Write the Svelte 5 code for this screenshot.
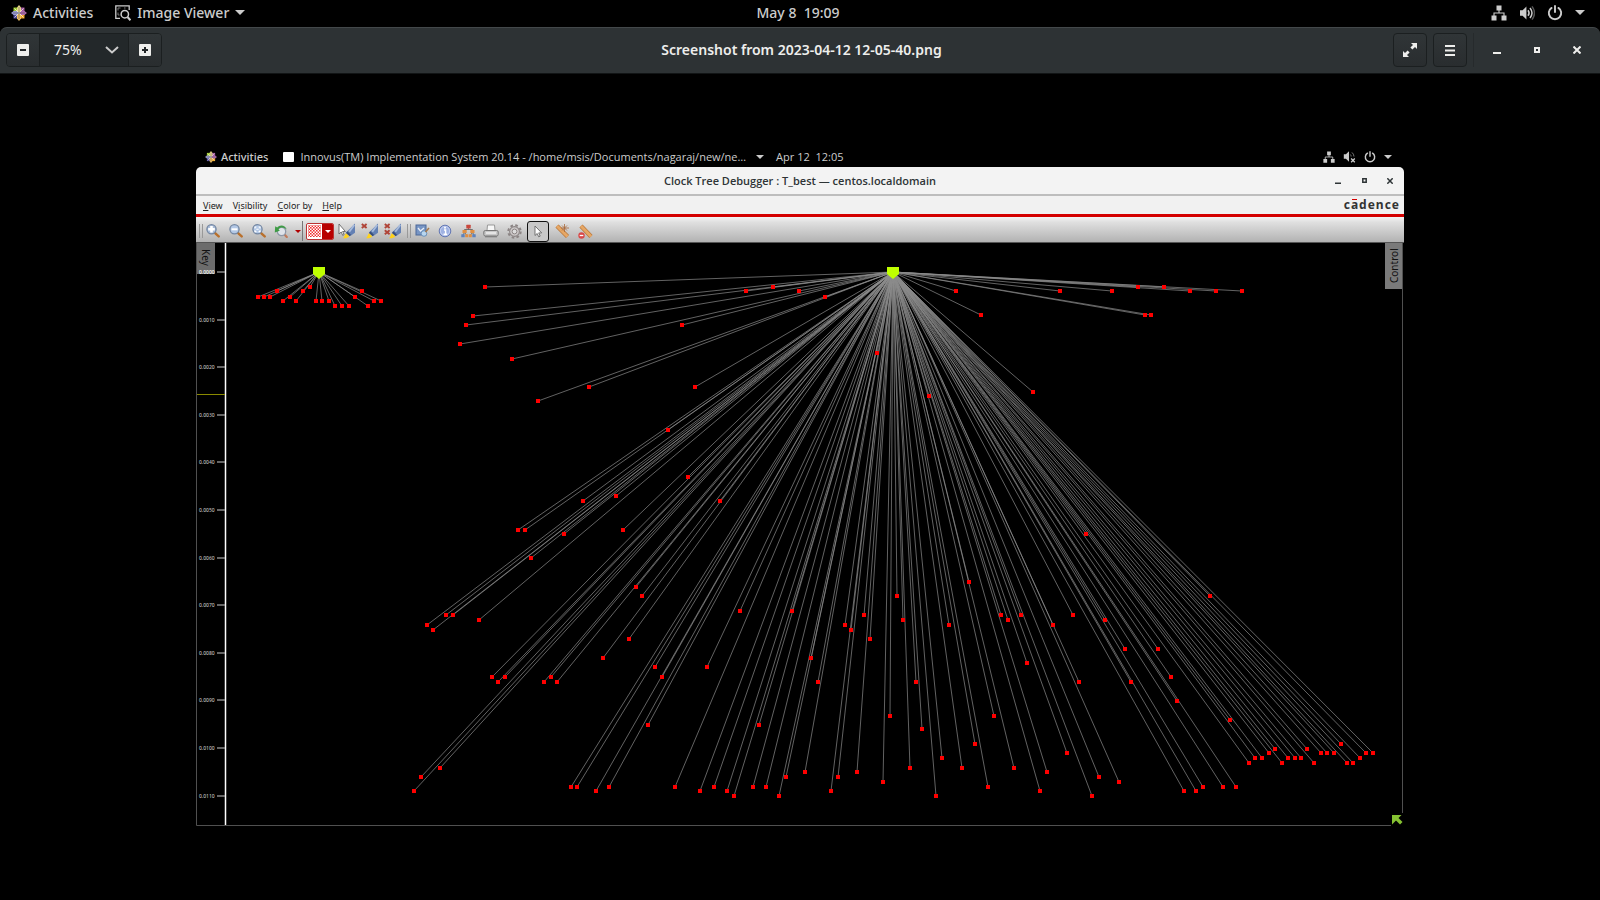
<script>
  const root = [893, 272];
  const sinks = [
    [485,287],[473,316],[466,325],[460,344],[512,359],[538,401],[589,387],[682,325],[695,387],[668,430],
    [688,477],[616,496],[746,291],[773,287],[799,291],[825,297],[877,353],[929,396],[956,291],[981,315],
    [1033,392],[1060,291],[1112,291],[1138,287],[1164,287],[1190,291],[1216,291],[1242,291],[1145,315],[1151,315],
    [583,501],[518,530],[525,530],[623,530],[564,534],[531,558],[636,587],[642,596],[446,615],[453,615],
    [427,625],[433,630],[479,620],[629,639],[603,658],[492,677],[498,682],[505,677],[544,682],[551,677],
    [557,682],[655,667],[662,677],[707,667],[648,725],[440,768],[421,777],[414,791],[571,787],[577,787],
    [596,791],[609,787],[675,787],[700,791],[714,787],[727,791],[734,796],[720,501],[740,611],[792,611],
    [845,625],[851,630],[864,615],[870,639],[897,596],[903,620],[949,625],[969,582],[1001,615],[1008,620],
    [1021,615],[1027,663],[811,658],[818,682],[759,725],[890,716],[916,682],[922,729],[994,716],[975,744],
    [942,758],[962,768],[910,768],[1014,768],[805,772],[857,772],[883,782],[838,777],[831,791],[786,777],
    [779,796],[766,787],[753,787],[936,796],[988,787],[1040,791],[1086,534],[1210,596],[1073,615],[1053,625],
    [1105,620],[1125,649],[1158,649],[1079,682],[1131,682],[1171,677],[1177,701],[1230,720],[1067,753],[1047,772],
    [1092,796],[1099,777],[1119,782],[1184,791],[1196,791],[1203,787],[1223,787],[1236,787],[1249,763],[1255,758],
    [1262,758],[1269,753],[1275,749],[1282,763],[1288,758],[1295,758],[1301,758],[1307,749],[1314,763],[1321,753],
    [1327,753],[1334,753],[1341,744],[1347,763],[1353,763],[1360,758],[1366,753],[1373,753]
  ];
  const smallRoot = [319, 272];
  const smallSinks = [
    [258,297],[264,297],[270,297],[277,291],[283,301],[290,297],[296,301],[303,291],[310,287],[316,301],
    [322,301],[329,301],[335,306],[342,306],[349,306],[355,297],[362,291],[368,306],[374,301],[381,301]
  ];
  const trees = [
    { root: smallRoot, sinks: smallSinks },
    { root, sinks }
  ];
  const ticks = Array.from({ length: 12 }, (_, i) => ({
    y: Math.round(272 + i * 47.6),
    label: (i / 1000).toFixed(4)
  }));
  let zoom = $state('75%');
</script>

{#snippet centos(size)}
  <svg width={size} height={size} viewBox="0 0 16 16" aria-hidden="true">
    <path d="M2.500 2.500h5v5h-5z" fill="#9ccd2a" /><path d="M8.500 2.500h5v5h-5z" fill="#a0569e" />
    <path d="M2.500 8.500h5v5h-5z" fill="#4f4a9a" /><path d="M8.500 8.500h5v5h-5z" fill="#efa724" />
    <path d="M8 0l2 2.600V6L8 8 6 6V2.600z" fill="#e8d98a" /><path d="M16 8l-2.600 2H10L8 8l2-2h3.400z" fill="#b06cb0" />
    <path d="M8 16l-2-2.600V10l2-2 2 2v3.400z" fill="#eebf62" /><path d="M0 8l2.600-2H6l2 2-2 2H2.600z" fill="#9a9cd0" />
    <path d="M3.500 3.500l9 9M12.500 3.500l-9 9" stroke="#f4f0e8" stroke-width=".8" />
    <path d="M8 2v12M2 8h12" stroke="#4a4a4a" stroke-width=".5" />
  </svg>
{/snippet}

{#snippet network(size)}
  <svg width={size} height={size} viewBox="0 0 16 16" fill="#ccc" aria-hidden="true">
    <path d="M5.500.500h5v5h-5zM.500 10.500h5v5h-5zM10.500 10.500h5v5h-5z" />
    <path d="M8 5v3M3 11V8h10v3" fill="none" stroke="#ccc" stroke-width="1.100" />
  </svg>
{/snippet}

{#snippet volume(size, muted)}
  <svg width={size} height={size} viewBox="0 0 16 16" aria-hidden="true">
    <path d="M1 5.300h2.600L7.400 1.600v12.800L3.600 10.700H1z" fill="#ccc" />
    {#if muted}
      <path d="M9 5.500q1 1 1 2.500M11 3q2.500 2 2.500 5" fill="none" stroke="#777" stroke-width="1.200" />
      <path d="M10 10.500l4.500 4.500M14.500 10.500 10 15" stroke="#ccc" stroke-width="1.600" />
    {:else}
      <path d="M9 5.200q2.200 2.800 0 5.600M11 3q4 5 0 10" fill="none" stroke="#ccc" stroke-width="1.500" />
      <path d="M13 1.400q5 6.600 0 13.200" fill="none" stroke="#555" stroke-width="1.500" />
    {/if}
  </svg>
{/snippet}

{#snippet power(size)}
  <svg width={size} height={size} viewBox="0 0 16 16" fill="none" stroke="#ccc" stroke-width="1.900" stroke-linecap="round" aria-hidden="true">
    <path d="M4.600 2.900a6.200 6.200 0 1 0 6.800 0M8 1v6" />
  </svg>
{/snippet}

{#snippet caret(w)}
  <svg width={w} height={w / 2} viewBox="0 0 10 5" aria-hidden="true"><path d="M0 0h10L5 5z" fill="#ccc" /></svg>
{/snippet}

{#snippet lens(kind)}
  <svg width="14" height="14" viewBox="0 0 14 14" aria-hidden="true">
    <path d="M8.800 8.800l3.900 3.600" stroke="#b9702c" stroke-width="2.400" stroke-linecap="round" />
    <circle cx="5.500" cy="5.300" r="4.600" fill={kind === 'in' ? '#a9bcd8' : '#b3c8e6'} stroke="#7487a2" stroke-width="1.300" />
    {#if kind === 'in'}
      <path d="M5.500 2v6.600M2.200 5.300h6.600" stroke="#fff" stroke-width="2.600" />
    {:else if kind === 'out'}
      <path d="M2.500 5.300h6" stroke="#fff" stroke-width="2" />
    {:else}
      <path d="M3 4.400V3h1.400M6.600 3H8v1.400M8 6.200v1.400H6.600M4.400 7.600H3V6.200M4.300 5.300h2.400" stroke="#fff" stroke-width="1.100" fill="none" />
    {/if}
  </svg>
{/snippet}

{#snippet brush(kind)}
  <svg width="18" height="16" viewBox="0 0 18 16" aria-hidden="true">
    <path d="M17 .500v9.300l-4.300 3L8.600 9z" fill="#6380b4" /><path d="M16.300 2 11.300 8.800" stroke="#a9bcdc" stroke-width="1.800" />
    <path d="M9.300 8.200l3.900 3.700-1.700 1.400-3.700-3.300z" fill="#3a4f7c" />
    <path d="M7.800 10.200l3.400 3c-1.200 1.700-3.600 2.300-6.200 2 1.500-1 1.600-3.500 2.800-5z" fill="#ffd21a" />
    {#if kind === 'pointer'}
      <path d="M1 1v10l2.200-2 1.500 3.300 1.400-.700L4.600 8.500h2.800z" fill="#fff" stroke="#555" stroke-width=".800" />
    {:else}
      <path d="M.800 1l4.800 4M5.600 1 .800 5" stroke="#b04438" stroke-width="1.900" />
      {#if kind === 'double'}<path d="M.800 7.200l4.800 4M5.600 7.200l-4.800 4" stroke="#b04438" stroke-width="1.900" />{/if}
    {/if}
  </svg>
{/snippet}

<div class="desktop">
  <header class="topbar">
    <div class="bar-left">
      <button class="plain act">{@render centos(16)}<span>Activities</span></button>
      <button class="plain app">
        <svg width="16" height="16" viewBox="0 0 16 16" fill="none" stroke="#ccc" aria-hidden="true">
          <path d="M5 13.400H.800V.800h13.400V5" stroke-width="1.300" />
          <path d="M3 5.500V3h2.500M9 3h1.500M3 7.500V10h1.500" stroke="#777" />
          <circle cx="9.800" cy="9.200" r="3.700" stroke-width="1.500" /><path d="M12.500 12l3 3.200" stroke-width="2.200" />
        </svg>
        <span>Image Viewer</span>{@render caret(10)}
      </button>
    </div>
    <time>May 8&nbsp; 19:09</time>
    <button class="plain status" aria-label="System">
      {@render network(16)}{@render volume(16, false)}{@render power(16)}{@render caret(10)}
    </button>
  </header>

  <div class="headerbar">
    <div class="zoom">
      <button aria-label="Zoom out"><svg width="12" height="12" viewBox="0 0 12 12"><rect width="12" height="12" rx="1" fill="#eeeeec" /><path d="M3 6h6" stroke="#222628" stroke-width="2" /></svg></button>
      <div class="level">
        <select aria-label="Zoom level" bind:value={zoom}><option>75%</option><option>100%</option></select>
        <svg width="14" height="8" viewBox="0 0 14 8" aria-hidden="true"><path d="M1 1l6 5.500L13 1" fill="none" stroke="#ccc" stroke-width="2" /></svg>
      </div>
      <button aria-label="Zoom in"><svg width="12" height="12" viewBox="0 0 12 12"><rect width="12" height="12" rx="1" fill="#eeeeec" /><path d="M3 6h6M6 3v6" stroke="#222628" stroke-width="2" /></svg></button>
    </div>
    <h1>Screenshot from 2023-04-12 12-05-40.png</h1>
    <div class="actions">
      <button class="raised" aria-label="Fullscreen">
        <svg width="14" height="14" viewBox="0 0 14 14" fill="#eeeeec" aria-hidden="true"><path d="M8 0h6v6l-2-2-2.600 2.600-2-2L10 2zM6 14H0V8l2 2 2.600-2.600 2 2L4 12z" /></svg>
      </button>
      <button class="raised" aria-label="Menu">
        <svg width="10" height="11" viewBox="0 0 10 11" fill="#eeeeec" aria-hidden="true"><path d="M0 0h10v2H0zM0 4.500h10v2H0zM0 9h10v2H0z" /></svg>
      </button>
      <div class="window">
        <button class="plain" aria-label="Minimize"><svg width="8" height="8" viewBox="0 0 8 8"><path d="M0 6h8v2H0z" fill="#eeeeec" /></svg></button>
        <button class="plain" aria-label="Maximize"><svg width="6" height="6" viewBox="0 0 6 6"><path d="M1 1h4v4H1z" fill="none" stroke="#eeeeec" stroke-width="2" /></svg></button>
        <button class="plain" aria-label="Close"><svg width="8" height="8" viewBox="0 0 8 8"><path d="M.500.500l7 7M7.500.500l-7 7" stroke="#eeeeec" stroke-width="2" /></svg></button>
      </div>
    </div>
  </div>

  <main class="viewer">
    <section class="shot">
      <div class="shot-bar">
        <span class="s-act">{@render centos(12)}<span>Activities</span></span>
        <span class="s-app">
          <svg width="11" height="10" viewBox="0 0 11 10" aria-hidden="true"><rect width="11" height="10" rx="1" fill="#fff" /></svg>
          <span class="s-title">Innovus(TM) Implementation System 20.14 - /home/msis/Documents/nagaraj/new/ne…</span>
          {@render caret(8)}
        </span>
        <time>Apr 12&nbsp; 12:05</time>
        <span class="s-status">{@render network(12)}{@render volume(13, true)}{@render power(12)}{@render caret(8)}</span>
      </div>

      <div class="titlebar">
        <h2>Clock Tree Debugger : T_best — centos.localdomain</h2>
        <div class="s-window">
          <button class="plain" aria-label="Minimize tool"><svg width="6" height="6" viewBox="0 0 6 6"><path d="M0 4.500h6V6H0z" fill="#2e3436" /></svg></button>
          <button class="plain" aria-label="Maximize tool"><svg width="5" height="5" viewBox="0 0 5 5"><path d="M.800.800h3.400v3.400H.800z" fill="none" stroke="#2e3436" stroke-width="1.500" /></svg></button>
          <button class="plain" aria-label="Close tool"><svg width="6" height="6" viewBox="0 0 6 6"><path d="M.300.300l5.400 5.400M5.700.300.300 5.700" stroke="#2e3436" stroke-width="1.500" /></svg></button>
        </div>
      </div>

      <nav class="menubar">
        <button class="plain"><u>V</u>iew</button>
        <button class="plain">V<u>i</u>sibility</button>
        <button class="plain"><u>C</u>olor by</button>
        <button class="plain"><u>H</u>elp</button>
        <span class="brand">c<span class="macron">a</span>dence</span>
      </nav>

      <div class="toolbar">
        <span class="grip"></span>
        <div class="tools">
          <button class="plain" aria-label="Magnify">{@render lens('in')}</button>
          <button class="plain" aria-label="Reduce">{@render lens('out')}</button>
          <button class="plain" aria-label="Fit">{@render lens('fit')}</button>
          <button class="plain wide" aria-label="Previous view">
            <svg width="14" height="14" viewBox="0 0 14 14" aria-hidden="true">
              <path d="M10 10l2.800 3" stroke="#c27a5a" stroke-width="2.200" stroke-linecap="round" />
              <circle cx="7.500" cy="7.500" r="4.200" fill="#dfe3ea" stroke="#8f98a8" stroke-width="1.300" />
              <path d="M12.800 5.500C11 .500 5.500.300 3.200 3.600L1.200 2.200.800 8.500l5-1.700-1.400-1.600c1.800-2.400 5.700-2.200 8.400.300z" fill="#3e9b45" />
            </svg>
            <svg width="6" height="3" viewBox="0 0 6 3" aria-hidden="true"><path d="M0 0h6L3 3z" fill="#b00000" /></svg>
          </button>
          <button class="swatch" aria-label="Highlight colour">
            <svg width="15" height="14" viewBox="0 0 15 14" aria-hidden="true">
              <defs><pattern id="chk" width="3" height="3" patternUnits="userSpaceOnUse"><rect width="3" height="3" fill="#fff" /><path d="M0 0h1.600v1.600H0zM1.600 1.600H3V3H1.600z" fill="#f03030" /></pattern></defs>
              <rect x="1" y="1" width="13" height="12" fill="url(#chk)" />
            </svg>
            <span><svg width="6" height="3" viewBox="0 0 6 3" aria-hidden="true"><path d="M0 0h6L3 3z" fill="#fff" /></svg></span>
          </button>
          <button class="plain" aria-label="Highlight selected">{@render brush('pointer')}</button>
          <button class="plain" aria-label="Clear highlight">{@render brush('single')}</button>
          <button class="plain" aria-label="Clear all highlights">{@render brush('double')}</button>
        </div>
        <span class="grip second"></span>
        <div class="tools">
          <button class="plain" aria-label="Preferences">
            <svg width="15" height="14" viewBox="0 0 15 14" aria-hidden="true"><rect x="1" y="1" width="10" height="10" fill="#7795c4" stroke="#4d6899" /><path d="M3 4l2.500 3L9 4" stroke="#e8eef8" stroke-width="1.300" fill="none" /><circle cx="9" cy="9.500" r="2.800" fill="#b8d6ef" stroke="#6d93bb" /><path d="M10.500 8l3.500-4" stroke="#a77a4b" stroke-width="1.500" /></svg>
          </button>
          <button class="plain" aria-label="Information">
            <svg width="14" height="14" viewBox="0 0 14 14" aria-hidden="true"><circle cx="7" cy="7" r="5.800" fill="#9fb2e2" stroke="#6478b4" /><circle cx="7" cy="7" r="4.600" fill="none" stroke="#ccd6f2" stroke-width=".800" /><path d="M6 6h1.600v4M5.500 10.300h3.600" stroke="#fff" stroke-width="1.400" fill="none" /><circle cx="7" cy="3.700" r="1" fill="#fff" /></svg>
          </button>
          <button class="plain" aria-label="Hierarchy">
            <svg width="15" height="14" viewBox="0 0 15 14" aria-hidden="true"><path d="M7.500 4v2M3.500 7V5.500h8V7M3.500 8.500 2 11M3.500 8.500 5.500 11M11.500 8.500 9.500 11M11.500 8.500 13 11" stroke="#666" stroke-width=".900" fill="none" /><rect x="5.300" y=".800" width="4.400" height="3.600" rx=".500" fill="#c9473c" /><rect x="1.500" y="6" width="4.200" height="3" fill="#e08f42" /><rect x="9.300" y="6" width="4.200" height="3" fill="#e08f42" /><path d="M.300 10.200h3.400v3H.300zM11.300 10.200h3.400v3h-3.400z" fill="#5d82bd" /><path d="M4.200 10.200h3v3h-3zM7.800 10.200h3v3h-3z" fill="#e08f42" /></svg>
          </button>
          <button class="plain" aria-label="Print">
            <svg width="16" height="14" viewBox="0 0 16 14" aria-hidden="true"><path d="M4 6.500 4.500 1h7l.500 5.500z" fill="#f7f7f7" stroke="#999" /><rect x=".800" y="6.500" width="14.400" height="5.500" rx="1.500" fill="#c8c8c8" stroke="#777" /><path d="M2 12.800h12" stroke="#777" /><path d="M3 9h10" stroke="#f4f4f4" stroke-width="1.300" /></svg>
          </button>
          <button class="plain" aria-label="Settings">
            <svg width="15" height="15" viewBox="0 0 15 15" aria-hidden="true"><circle cx="7.500" cy="7.500" r="6.200" fill="none" stroke="#8c8585" stroke-width="2" stroke-dasharray="2.600 2.270" /><circle cx="7.500" cy="7.500" r="4.900" fill="#ccc8c8" stroke="#8c8585" stroke-width="1.100" /><circle cx="7.500" cy="7.500" r="2.400" fill="#ddd" stroke="#8c8585" /></svg>
          </button>
          <button class="plain active" aria-label="Select" aria-pressed="true">
            <svg width="10" height="13" viewBox="0 0 10 13" aria-hidden="true"><path d="M2 1v9.500l2.200-2 1.500 3.300 1.500-.700-1.500-3.200h3z" fill="#fff" stroke="#666" stroke-width=".900" /></svg>
          </button>
          <button class="plain" aria-label="Measure">
            <svg width="15" height="15" viewBox="0 0 15 15" aria-hidden="true"><path d="M2 2l10.500 10.500" stroke="#b9763a" stroke-width="4.400" /><path d="M2 2l10.500 10.500" stroke="#e6a765" stroke-width="3" /><path d="M9.500 0v8M6 4h8M7 1.500l5 5M12 1.500l-5 5" stroke="#a8683a" stroke-width=".800" /></svg>
          </button>
          <button class="plain" aria-label="Remove measures">
            <svg width="15" height="15" viewBox="0 0 15 15" aria-hidden="true"><path d="M3 2l10 10.500" stroke="#b9763a" stroke-width="4.400" /><path d="M3 2l10 10.500" stroke="#e6a765" stroke-width="3" /><circle cx="3.500" cy="11.500" r="3.200" fill="#d94848" /><path d="M1.700 11.500h3.600" stroke="#fff" stroke-width="1.300" /></svg>
          </button>
        </div>
      </div>

      <div class="canvas">
        <button class="tab key">Key</button>
        <button class="tab control">Control</button>
        <svg class="chart" viewBox="196 243 1208 583" role="img" aria-label="Clock tree">
          <path d="M196.500 243V825.500H1391M1402.500 243V813" fill="none" stroke="#505050" />
          {#each trees as t}
            {#each t.sinks as [x, y]}
              <line x1={t.root[0]} y1={t.root[1]} x2={x} y2={y} />
            {/each}
          {/each}
          {#each trees as t}
            {#each t.sinks as [x, y]}
              <rect x={x - 2} y={y - 2} width="4" height="4" fill="#f00" />
            {/each}
            <path d="M{t.root[0] - 6} 267h12v7l-6 5-6-5z" fill="#bfff00" />
          {/each}
          <path d="M225.500 243V825" stroke="#fff" stroke-width="1.500" />
          {#each ticks as tick}
            <path d="M217 {tick.y}h8" stroke="#aaa" stroke-width="1.200" />
            <text class:first={tick.y === 272} x="199" y={tick.y + 2}>{tick.label}</text>
          {/each}
          <path d="M197 394.500h28" stroke="#8a8a00" />
          <path d="M1392 815h9.500l-3 3 4 4-2.500 2.500-4-4-4 4z" fill="#86c232" />
        </svg>
      </div>
    </section>
  </main>
</div>

<style>
  :global(body) { background: #000; }
  * { box-sizing: border-box; }
  .desktop {
    display: flex; flex-direction: column; min-height: 100vh; background: #000;
    font-family: "Noto Sans", "Open Sans", sans-serif; font-size: 14px; font-weight: 500; color: #ccc;
  }
  button, select { font: inherit; color: inherit; margin: 0; padding: 0; border: 0; background: none; }
  svg { display: block; flex: none; }
  button { display: flex; align-items: center; justify-content: center; }
  h1, h2 { margin: 0; font-size: inherit; text-align: center; white-space: nowrap; }
  h1, h2 { font-weight: 600; }

  .topbar { display: grid; grid-template-columns: 1fr auto 1fr; align-items: center; height: 27px; padding: 0 15px 2px 11px; }
  .topbar span, time { white-space: nowrap; }
  .bar-left { display: flex; gap: 22px; }
  .act, .app { gap: 6px; }
  .status { justify-self: end; gap: 12px; }

  .headerbar {
    display: grid; grid-template-columns: 1fr auto 1fr; align-items: center; height: 47px; padding: 0 3px 1px 6px;
    background: #2d3234; border-top: 1px solid #43484a; border-bottom: 1px solid #111415; border-radius: 7px 7px 0 0; color: #eeeeec;
  }
  .headerbar h1 { padding-bottom: 2px; }
  .zoom { display: flex; justify-self: start; height: 34px; border: 1px solid #1b1f20; border-radius: 4px; overflow: hidden; }
  .zoom button { width: 32px; background: linear-gradient(#303537, #292d2f); }
  .level { display: flex; align-items: center; width: 90px; padding: 0 9px 0 14px; background: #23282a; border: solid #1b1f20; border-width: 0 1px; font-weight: 400; }
  .level select { flex: 1; appearance: none; padding-bottom: 2px; }
  .level svg { pointer-events: none; }
  .actions { display: flex; justify-self: end; gap: 6px; }
  .raised { width: 34px; height: 34px; border: 1px solid #1b1f20; border-radius: 4px; background: linear-gradient(#303537, #292d2f); }
  .window { display: flex; border-left: 1px solid #262a2c; padding-left: 3px; }
  .window button { width: 40px; }

  .viewer { flex: 1; display: flex; flex-direction: column; align-items: center; justify-content: center; }
  .shot { width: 75.5%; font-size: 11px; }
  .shot-bar { display: flex; align-items: center; height: 19px; padding: 0 12px 2px 9px; }
  .s-act, .s-app, .s-status { display: flex; align-items: center; }
  .s-act { gap: 4px; margin-right: 15px; }
  .s-app { gap: 6px; margin-right: 12px; }
  .s-title { white-space: nowrap; margin-right: 4px; }
  .s-title, .shot-bar time, h2 { font-family: "Open Sans", "Noto Sans", sans-serif; }
  .s-title, .shot-bar time { font-weight: 500; }
  .s-status { margin-left: auto; gap: 8px; }

  .titlebar {
    display: grid; grid-template-columns: 1fr auto 1fr; align-items: center; height: 29px;
    background: #f3f3f3; border-bottom: 2px solid #bdbdbd; border-radius: 5px 5px 0 0; color: #2e3436;
  }
  .titlebar h2 { grid-column: 2; }
  .s-window { display: flex; justify-self: end; padding-right: 1px; }
  .s-window button { width: 26px; height: 20px; }

  .menubar { display: flex; align-items: center; gap: 10px; height: 21px; padding: 0 4px 0 7px; background: #f1f1f1; border-bottom: 3px solid #d40000; color: #222; font-size: 9px; font-weight: 400; }
  .brand { margin-left: auto; font-size: 12px; line-height: 14px; font-weight: 700; letter-spacing: 1px; color: #333; }
  .macron { position: relative; }
  .macron::before { content: ""; position: absolute; left: 1px; top: 3px; width: 5px; height: 1px; background: #d40000; }

  .toolbar { display: flex; align-items: center; height: 26px; padding: 3px 0 0 3px; background: linear-gradient(#f4f4f4, #e0e0e0 20%, #b2b2b2); border-bottom: 1px solid #555; }
  .grip { width: 4px; height: 14px; border: solid #999; border-width: 0 1px; }
  .grip.second { margin: 0 1px 0 4px; }
  .tools { display: flex; align-items: center; gap: 3px; }
  .tools button { width: 20px; height: 20px; }
  .tools .wide { width: 31px; gap: 7px; border-right: 1px solid #777; }
  .tools .swatch { width: 28px; height: 17px; background: #fff; border: 1px solid #b33; border-radius: 2px; overflow: hidden; }
  .swatch span { display: flex; align-items: center; justify-content: center; align-self: stretch; flex: 1; background: #b80000; }
  .tools .active { width: 22px; height: 21px; border: 1px solid #111; border-radius: 3px; background: #c8c8c8; }

  .canvas { position: relative; background: #000; }
  .chart { position: relative; width: 100%; height: auto; pointer-events: none; }
  .chart line { stroke: #8c8c8c; stroke-width: .7; }
  .chart rect { shape-rendering: crispEdges; }
  .chart text { fill: #bbb; font-size: 5px; }
  .chart .first { fill: #fff; }
  .tab { position: absolute; top: 0; writing-mode: vertical-rl; font-size: 10px; font-weight: 400; color: #111; }
  .key { left: 1px; width: 18px; height: 31px; padding-bottom: 2px; background: #6c6c6c; }
  .control { right: 2px; width: 17px; height: 46px; background: #7a7a7a; transform: rotate(180deg); }
</style>
